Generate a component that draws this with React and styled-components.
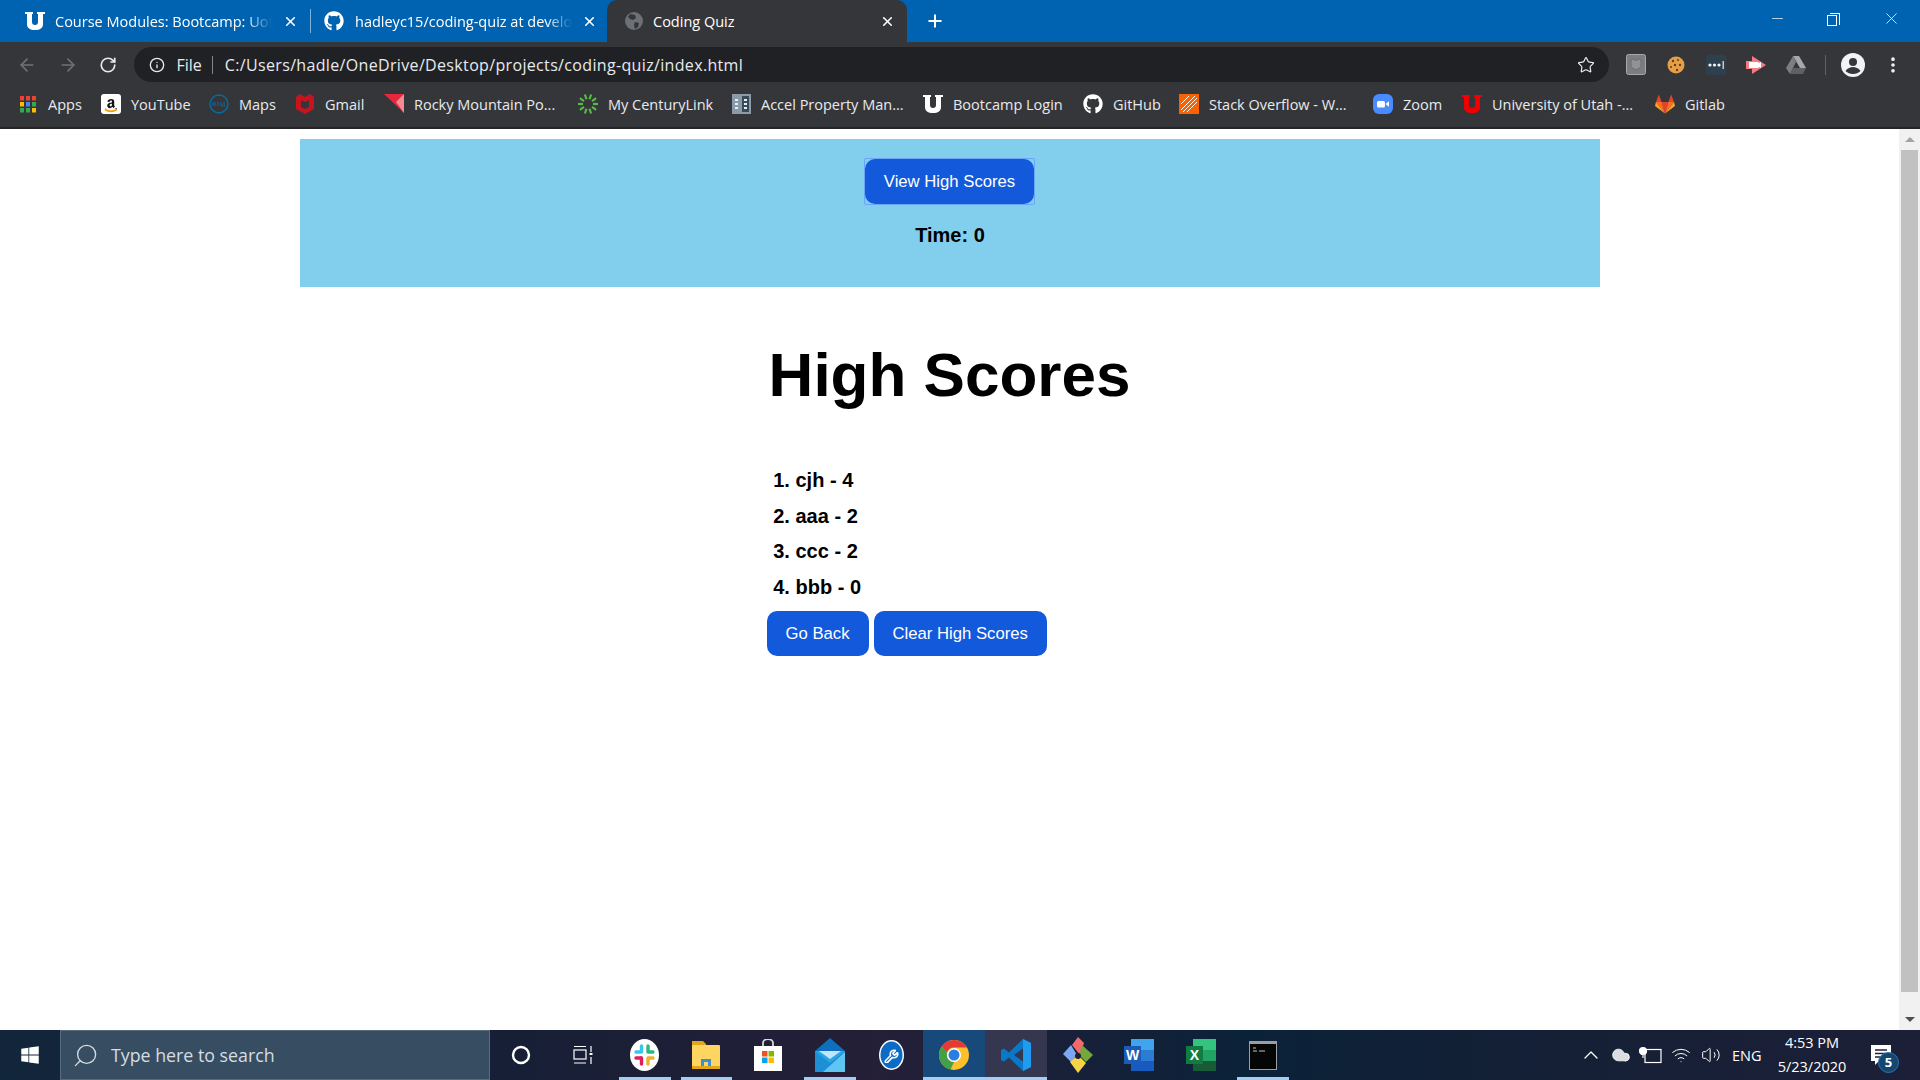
import React from "react";
import styled, { createGlobalStyle } from "styled-components";
import { FaGithub, FaWindows, FaAmazon } from "react-icons/fa";
import {
  ArrowLeft,
  ArrowRight,
  RotateCw,
  Info,
  Star,
  X,
  Plus,
  Minus,
  Search,
  MoreVertical,
  ChevronUp,
  Cloud,
  Volume2,
  Wifi,
  Wrench,
} from "lucide-react";

const GlobalStyle = createGlobalStyle`
  html, body {
    margin: 0;
    height: 100%;
    overflow: hidden;
    background: #fff;
  }
  #root { height: 100%; }
  * { box-sizing: border-box; }
`;

const UI_FONT = `"Open Sans", "Noto Sans", sans-serif`;
const PAGE_FONT = `"Liberation Sans", Arial, sans-serif`;

const Screen = styled.div`
  display: flex;
  flex-direction: column;
  width: 1920px;
  height: 1080px;
`;

/* ---- tab strip ---- */
const TabStrip = styled.div`
  display: flex;
  align-items: stretch;
  height: 42px;
  background: #0063b1;
  font-family: ${UI_FONT};
  color: #fff;
`;

const Tab = styled.div`
  display: flex;
  align-items: center;
  width: ${(p) => p.$w}px;
  padding-left: ${(p) => p.$pad}px;
  border-radius: 10px 10px 0 0;
  background: ${(p) => (p.$active ? "#35363a" : "transparent")};
`;

const Favicon = styled.span`
  display: flex;
  flex: none;
  width: 20px;
  justify-content: center;
`;

const TabTitle = styled.span`
  width: ${(p) => p.$w}px;
  margin-left: ${(p) => p.$ml}px;
  font-size: 14.5px;
  white-space: nowrap;
  overflow: hidden;
  mask-image: ${(p) => (p.$fade ? "linear-gradient(90deg, #000 88%, transparent)" : "none")};
`;

const TabClose = styled.span`
  display: flex;
  margin-left: ${(p) => p.$ml}px;
`;

const TabDivider = styled.span`
  align-self: center;
  width: 1px;
  height: 24px;
  background: #7fb2d9;
`;

const NewTab = styled.span`
  display: flex;
  align-items: center;
  margin-left: 18px;
`;

const WindowControls = styled.div`
  display: flex;
  align-items: flex-start;
  margin-left: auto;
  padding-top: 9px;
`;

const WindowButton = styled.span`
  display: flex;
  align-items: center;
  justify-content: center;
  width: 57px;
  height: 19px;
`;

const RestoreIcon = styled.span`
  position: relative;
  display: block;
  width: 10px;
  height: 11px;
  margin: 3px 5px 0 0;
  border: 1px solid #fff;
  &::after {
    content: "";
    position: absolute;
    top: -3px;
    right: -4px;
    width: 9px;
    height: 11px;
    border-top: 1px solid #fff;
    border-right: 1px solid #fff;
  }
`;

/* ---- address bar ---- */
const Toolbar = styled.div`
  display: flex;
  align-items: center;
  height: 42px;
  padding: 3px 0 0 17px;
  background: #35363a;
  font-family: ${UI_FONT};
`;

const NavButton = styled.span`
  display: flex;
  justify-content: center;
  width: 20px;
  margin-right: 20.5px;
`;

const Omnibox = styled.div`
  display: flex;
  align-items: center;
  width: 1475px;
  height: 35px;
  margin-left: -5px;
  padding: 0 14px 0 15px;
  border-radius: 18px;
  background: #202124;
  color: #e8eaed;
`;

const FileChip = styled.span`
  margin-left: 12px;
  font-size: 16px;
`;

const OmniDivider = styled.span`
  width: 1px;
  height: 18px;
  margin: 0 12px 0 10px;
  background: #80868b;
`;

const Url = styled.span`
  font-size: 16px;
  letter-spacing: 0.34px;
  white-space: nowrap;
`;

const StarWrap = styled.span`
  display: flex;
  margin-left: auto;
`;

const ExtensionRow = styled.div`
  display: flex;
  align-items: center;
  margin-left: 7px;
`;

const Extension = styled.span`
  display: flex;
  justify-content: center;
  width: 40px;
  margin-left: ${(p) => p.$ml || 0}px;
`;

const ToolDivider = styled.span`
  width: 1px;
  height: 20px;
  margin: 0 15px 0 9px;
  background: #5f6368;
`;

/* ---- bookmarks ---- */
const Bookmarks = styled.div`
  display: flex;
  align-items: center;
  gap: 20px;
  height: 45px;
  padding: 0 0 3px 18px;
  background: #35363a;
  border-bottom: 2px solid #242528;
  font-family: ${UI_FONT};
  color: #e8eaed;
`;

const Bookmark = styled.div`
  display: flex;
  align-items: center;
  gap: 10px;
`;

const BookmarkIcon = styled.span`
  display: flex;
  justify-content: center;
  width: 20px;
`;

const BookmarkLabel = styled.span`
  width: ${(p) => p.$w}px;
  font-size: 14.5px;
  white-space: nowrap;
`;

/* ---- page ---- */
const Viewport = styled.div`
  flex: 1;
  display: flex;
  min-height: 0;
  background: #fff;
`;

const PageBody = styled.main`
  flex: 1;
  padding-top: 10px;
  font-family: ${PAGE_FONT};
  color: #000;
`;

const Wrapper = styled.div`
  width: 1300px;
  margin: 0 auto;
`;

const Header = styled.header`
  display: flex;
  flex-direction: column;
  align-items: center;
  height: 148px;
  padding-top: 20px;
  background: #81cfec;
`;

const QuizButton = styled.button`
  position: relative;
  height: 45px;
  padding: 1px 19px 0;
  border: 0;
  border-radius: 10px;
  background: #1259dc;
  color: #fff;
  font-family: ${PAGE_FONT};
  font-size: 16.7px;
  &::after {
    content: "";
    display: ${(p) => (p.$focused ? "block" : "none")};
    position: absolute;
    inset: -1px;
    border: 1.5px solid #6aa5f7;
    border-radius: 2px;
  }
`;

const Timer = styled.p`
  margin: 20px 0 0;
  padding-left: 1px;
  font-size: 20px;
  font-weight: 700;
  line-height: 23px;
`;

const Scores = styled.section`
  width: 366px;
  margin: 0 auto;
`;

const Title = styled.h1`
  margin: 0;
  padding-top: 51px;
  font-size: 62px;
  line-height: 74px;
  text-align: center;
  white-space: nowrap;
`;

const ScoreList = styled.ol`
  margin: 51px 0 0;
  padding: 0 0 0 29px;
`;

const ScoreItem = styled.li`
  font-size: 20px;
  font-weight: 700;
  line-height: 35.5px;
`;

const ButtonRow = styled.div`
  display: flex;
  gap: 5px;
  margin-top: 6px;
`;

const Scrollbar = styled.aside`
  display: flex;
  flex-direction: column;
  align-items: center;
  width: 21px;
  background: #f1f1f1;
`;

const ScrollArrow = styled.span`
  flex: none;
  height: 21px;
  display: flex;
  align-items: center;
  margin-top: ${(p) => (p.$down ? "auto" : 0)};
  &::before {
    content: "";
    border-left: 5px solid transparent;
    border-right: 5px solid transparent;
    ${(p) => (p.$down ? "border-top: 5px solid #505050;" : "border-bottom: 5px solid #a3a3a3;")}
  }
`;

const ScrollThumb = styled.span`
  width: 17px;
  height: 842px;
  background: #c1c1c1;
`;

/* ---- taskbar ---- */
const Taskbar = styled.footer`
  display: flex;
  align-items: stretch;
  height: 50px;
  background: linear-gradient(
    90deg,
    #12263b 0,
    #161f36 500px,
    #251f38 880px,
    #0a2238 1250px,
    #122036 1450px,
    #1c1f37 1920px
  );
  font-family: ${UI_FONT};
  color: #fff;
`;

const StartCell = styled.span`
  display: flex;
  align-items: center;
  justify-content: center;
  width: 60px;
`;

const SearchBox = styled.div`
  display: flex;
  align-items: center;
  width: 430px;
  padding-left: 11px;
  background: #374e62;
  border: 1px solid #566b7c;
  color: #d5dde3;
`;

const FlippedSearch = styled(Search)`
  transform: scaleX(-1);
`;

const SearchText = styled.span`
  margin-left: 12px;
  font-size: 17.8px;
`;

const TaskCell = styled.span`
  position: relative;
  display: flex;
  align-items: center;
  justify-content: center;
  width: 61.85px;
  background: ${(p) => p.$bg || "transparent"};
  &::after {
    content: "";
    display: ${(p) => (p.$open ? "block" : "none")};
    position: absolute;
    left: ${(p) => (p.$full ? 0 : 5)}px;
    right: ${(p) => (p.$full ? 0 : 5)}px;
    bottom: 0;
    height: 3px;
    background: #a5cdf0;
  }
`;

const Tray = styled.div`
  display: flex;
  align-items: center;
  margin-left: auto;
  padding-right: 24px;
`;

const TrayIcon = styled.span`
  display: flex;
  justify-content: center;
  width: 30px;
`;

const Lang = styled.span`
  margin-left: 6px;
  width: 36px;
  font-size: 14.5px;
`;

const Clock = styled.div`
  width: 84px;
  margin-left: 2px;
  font-size: 14.5px;
  line-height: 24px;
  text-align: center;
`;

const Notify = styled.span`
  position: relative;
  display: flex;
  justify-content: center;
  width: 30px;
  margin-left: 12px;
`;

const NotifyBadge = styled.span`
  position: absolute;
  right: -3px;
  bottom: -8px;
  width: 21px;
  height: 21px;
  border-radius: 50%;
  background: #14466f;
  border: 1px solid #2a77b5;
  font-size: 13px;
  font-weight: 700;
  line-height: 19px;
  text-align: center;
`;

/* ---- drawn icons ---- */
const UtahLogo = ({ size = 20, color = "#fff" }) => (
  <svg width={size} height={size} viewBox="0 0 20 20">
    <path
      fill={color}
      d="M0 1h8v2H7v8c0 2 1 3 3 3s3-1 3-3V3h-1V1h8v2h-2v10c0 4-3 6-8 6s-8-2-8-6V3H0z"
    />
  </svg>
);

const AppsGrid = () => {
  const colors = ["#ea4335", "#ea4335", "#ea4335", "#fbbc04", "#4285f4", "#34a853", "#34a853", "#34a853", "#fbbc04"];
  return (
    <svg width="16" height="17" viewBox="0 0 16 17">
      {colors.map((c, i) => (
        <rect key={i} x={(i % 3) * 6} y={Math.floor(i / 3) * 6} width="4" height="4.5" fill={c} />
      ))}
    </svg>
  );
};

const AmazonIcon = () => (
  <svg width="20" height="20" viewBox="0 0 20 20">
    <rect width="20" height="20" rx="3" fill="#fff" />
    <foreignObject x="3" y="1" width="14" height="14">
      <FaAmazon size={14} color="#111" />
    </foreignObject>
    <path d="M4 15.500c4 2.500 8 2.500 12 0" stroke="#f90" strokeWidth="1.700" fill="none" />
  </svg>
);

const DellIcon = () => (
  <svg width="20" height="20" viewBox="0 0 20 20" fill="none" stroke="#0a6b9f">
    <circle cx="10" cy="10" r="9" strokeWidth="1.400" />
    <path d="M4 8v4M6 8v4M9 8v4M12 8v4h2M15 8v4h1.500" strokeWidth="1" />
  </svg>
);

const McAfeeIcon = () => (
  <svg width="18" height="20" viewBox="0 0 18 20">
    <path fill="#c8141e" d="M0 3l4-3 5 3 5-3 4 3v12l-9 5-9-5z" />
    <path fill="#35363a" d="M5 6l4 2 4-2v7l-4 2-4-2z" />
  </svg>
);

const RockyIcon = () => (
  <svg width="20" height="20" viewBox="0 0 20 20">
    <path fill="#e8263c" d="M0 0h20v19z" />
    <path fill="#f58a96" d="M12 8l8-8v19z" />
  </svg>
);

const CenturyIcon = () => (
  <svg width="20" height="20" viewBox="0 0 20 20" stroke="#57b947" strokeWidth="2.200">
    {Array.from({ length: 10 }).map((_, i) => {
      const a = (i * Math.PI) / 5;
      return (
        <line
          key={i}
          x1={10 + Math.cos(a) * 5}
          y1={10 + Math.sin(a) * 5}
          x2={10 + Math.cos(a) * 10}
          y2={10 + Math.sin(a) * 10}
        />
      );
    })}
  </svg>
);

const AccelIcon = () => (
  <svg width="19" height="20" viewBox="0 0 19 20">
    <rect width="19" height="20" fill="#8a9aa8" />
    <rect x="10" y="2" width="7" height="16" fill="#394a58" />
    <path fill="#e8edf0" d="M3 5h3v2H3zM3 9h3v2H3zM3 13h3v2H3zM12 5h3v2h-3zM12 9h3v2h-3zM12 13h3v2h-3z" />
  </svg>
);

const HomeDepotIcon = () => (
  <svg width="20" height="20" viewBox="0 0 20 20" stroke="#fff" strokeWidth="1">
    <rect width="20" height="20" fill="#f96302" stroke="none" />
    <path d="M2 16L16 2M4 18L18 4M8 18L18 8M2 10L10 2" />
  </svg>
);

const ZoomIcon = () => (
  <svg width="20" height="20" viewBox="0 0 20 20">
    <rect width="20" height="20" rx="6" fill="#4a8cff" />
    <rect x="4" y="7" width="8" height="6.500" rx="1.500" fill="#fff" />
    <path fill="#fff" d="M13 9.500l3-2.200v5.500l-3-2.200z" />
  </svg>
);

const GitlabIcon = () => (
  <svg width="21" height="20" viewBox="0 0 21 20">
    <path fill="#e24329" d="M10.500 20L7 8h7z" />
    <path fill="#fc6d26" d="M10.500 20L1 8h6zM10.500 20L20 8h-6z" />
    <path fill="#fca326" d="M1 8L0 12l10.500 8zM20 8l1 4-10.500 8z" />
    <path fill="#e24329" d="M1 8l3-8 3 8zM14 8l3-8 3 8z" />
  </svg>
);

const GlobeIcon = () => (
  <svg width="18" height="18" viewBox="0 0 18 18">
    <circle cx="9" cy="9" r="9" fill="#6d7074" />
    <path fill="#35363a" d="M5 2l5 1 1 3-3 2-3-1-2-2zM10 10l4 1-1 4-3 2-1-4z" />
  </svg>
);

const ShieldExt = () => (
  <svg width="20" height="21" viewBox="0 0 20 21">
    <rect x=".5" y=".5" width="19" height="20" rx="2" fill="#7b7d80" stroke="#a6a8aa" />
    <path fill="#909294" stroke="#6b6d70" d="M5 6l2-1 3 1.500L13 5l2 1v7l-5 3-5-3z" />
  </svg>
);

const CookieExt = () => (
  <svg width="18" height="18" viewBox="0 0 18 18">
    <circle cx="9" cy="9" r="8.500" fill="#e3a047" />
    <g fill="#6b3d12">
      <circle cx="6" cy="5" r="1.200" />
      <circle cx="11" cy="4" r="1" />
      <circle cx="13" cy="9" r="1.200" />
      <circle cx="8" cy="9" r="1.200" />
      <circle cx="4" cy="11" r="1" />
      <circle cx="10" cy="14" r="1.200" />
    </g>
  </svg>
);

const DotsExt = () => (
  <svg width="20" height="20" viewBox="0 0 20 20">
    <rect width="20" height="20" rx="2" fill="#2e3f4e" />
    <g fill="#f2f4f5">
      <circle cx="4" cy="10" r="1.600" />
      <circle cx="8.500" cy="10" r="1.600" />
      <circle cx="13" cy="10" r="1.600" />
    </g>
    <rect x="16.500" y="6" width="1.500" height="8" fill="#c0c6ca" />
  </svg>
);

const ArrowExt = () => (
  <svg width="20" height="18" viewBox="0 0 20 18">
    <path fill="#f67b7f" d="M6 0l14 9-14 9v-5H0V5h6z" />
    <path fill="#fff" d="M3 6h9l1 1 2-1v6l-2-1-1 1H3z" />
  </svg>
);

const DriveExt = () => (
  <svg width="20" height="18" viewBox="0 0 20 18">
    <path fill="#a7a8aa" d="M7 0h6l7 12h-6z" />
    <path fill="#7d7e80" d="M7 0l3 6-6 12-4-6z" />
    <path fill="#5f6063" d="M4 18l3-6h13l-3 6z" />
  </svg>
);

const AvatarIcon = () => (
  <svg width="24" height="24" viewBox="0 0 24 24">
    <circle cx="12" cy="12" r="12" fill="#f1f3f4" />
    <circle cx="12" cy="9" r="4" fill="#35363a" />
    <path fill="#35363a" d="M4.500 18c2-3 5-4 7.500-4s5.500 1 7.500 4c-2 2-4.500 3-7.500 3s-5.500-1-7.500-3z" />
  </svg>
);

const CortanaIcon = () => (
  <svg width="20" height="20" viewBox="0 0 20 20">
    <circle cx="10" cy="10" r="8" fill="none" stroke="#fff" strokeWidth="2.400" />
  </svg>
);

const TaskViewIcon = () => (
  <svg width="20" height="20" viewBox="0 0 20 20" stroke="#fff" strokeWidth="1.200" fill="none">
    <rect x="1" y="5" width="12" height="9" />
    <path d="M1 1.500h12M1 18h12M18 1v6M18 12v7" />
    <path d="M16.500 9h3" strokeWidth="2" />
  </svg>
);

const SlackIcon = () => (
  <svg width="29" height="32" viewBox="0 0 29 32">
    <ellipse cx="14.500" cy="16" rx="14.500" ry="16" fill="#fff" />
    <g strokeWidth="3.400" strokeLinecap="round">
      <path d="M11.500 7v6M11 13H6" stroke="#36c5f0" />
      <path d="M18 7v6M18 13h5" stroke="#2eb67d" />
      <path d="M18 25v-6M18 19h5" stroke="#ecb22e" />
      <path d="M11.500 25v-6M11 19H6" stroke="#e01e5a" />
    </g>
  </svg>
);

const FolderIcon = () => (
  <svg width="28" height="28" viewBox="0 0 28 28">
    <path fill="#e3a616" d="M0 0h11l3 3v4H0z" />
    <rect y="4" width="28" height="24" rx="1" fill="#ffd562" />
    <path fill="#e3a616" d="M0 25h28v3H0z" />
    <path fill="#3d8ed6" d="M9 25v-7h10v7h-3v-4h-4v4z" />
  </svg>
);

const StoreIcon = () => (
  <svg width="28" height="32" viewBox="0 0 28 32">
    <path d="M9 7V4a5 4 0 0 1 10 0v3" stroke="#d5d8dc" strokeWidth="1.800" fill="none" />
    <rect y="7" width="28" height="25" fill="#fff" />
    <rect x="8" y="12" width="5.500" height="5.500" fill="#f25022" />
    <rect x="14.500" y="12" width="5.500" height="5.500" fill="#7fba00" />
    <rect x="8" y="18.500" width="5.500" height="5.500" fill="#00a4ef" />
    <rect x="14.500" y="18.500" width="5.500" height="5.500" fill="#ffb900" />
  </svg>
);

const MailIcon = () => (
  <svg width="30" height="34" viewBox="0 0 30 34">
    <path fill="#0d6fbd" d="M15 0l15 13v3H0v-3z" />
    <rect y="13" width="30" height="21" fill="#2aa5e6" />
    <path fill="#1d8fd4" d="M0 13l15 12 15-12v21H0z" />
    <path fill="#bfe6fa" d="M4 13h22l-11 8z" />
    <path fill="#5fc6f2" d="M30 34H8l22-20z" />
  </svg>
);

const ThunderIcon = () => (
  <svg width="25" height="30" viewBox="0 0 25 30">
    <ellipse cx="12.500" cy="15" rx="12.500" ry="15" fill="#fff" />
    <ellipse cx="12.500" cy="15" rx="11" ry="13.500" fill="#0a6cc4" />
    <foreignObject x="5" y="7" width="15" height="16">
      <Wrench size={15} color="#fff" strokeWidth={2.600} />
    </foreignObject>
  </svg>
);

const ChromeIcon = () => (
  <svg width="30" height="30" viewBox="0 0 30 30">
    <circle cx="15" cy="15" r="15" fill="#fbc02d" />
    <path fill="#e53935" d="M15 0a15 15 0 0 1 13 7.500H15a7.500 7.500 0 0 0-7 5L2.500 6.500A15 15 0 0 1 15 0z" />
    <path fill="#43a047" d="M2.500 6.500L8 12.500c-1 4 2 9.500 7 9.500L11.500 29.500A15 15 0 0 1 2.500 6.500z" />
    <circle cx="15" cy="15" r="7" fill="#fff" />
    <circle cx="15" cy="15" r="5.500" fill="#2a7de1" />
  </svg>
);

const VsCodeIcon = () => (
  <svg width="30" height="32" viewBox="0 0 30 32">
    <path fill="#0a78c8" d="M22 0l8 4v24l-8 4L8 18.500 3 22.500 0 21V11l3-1.500 5 4z" />
    <path fill="#1f9cf0" d="M22 0l8 4v24l-8 4z" />
    <path fill="#34374f" d="M22 9.500L13 16l9 6.500z" />
  </svg>
);

const GitExtIcon = () => (
  <svg width="30" height="36" viewBox="0 0 30 36">
    <path fill="#f26a6a" d="M15 0l6 6-4 12-8-10z" />
    <path fill="#7da7f2" d="M8 8l6 10-6 7-8-8z" />
    <path fill="#74a73c" d="M19 8l11 10-7 7-7-7z" />
    <path fill="#f5d547" d="M7 25l8-7 8 8-8 10z" />
    <circle cx="15" cy="19" r="3" fill="#1c1f37" />
  </svg>
);

const OfficeIcon = ({ letter, dark, mid, light, side }) => (
  <svg width="30" height="32" viewBox="0 0 30 32">
    <rect x="7" width="23" height="11" fill={light} />
    <rect x="7" y="11" width="23" height="11" fill={mid} />
    <rect x="7" y="22" width="23" height="10" fill={dark} />
    <rect y="7" width="17" height="18" fill={side} />
    <text
      x="8.500"
      y="21"
      fill="#fff"
      fontSize="14"
      fontWeight="700"
      textAnchor="middle"
      fontFamily="Liberation Sans, sans-serif"
    >
      {letter}
    </text>
  </svg>
);

const TerminalIcon = () => (
  <svg width="28" height="29" viewBox="0 0 28 29">
    <rect width="28" height="29" fill="#9a9da1" />
    <rect x="1" y="3" width="26" height="25" fill="#050505" />
    <path d="M4 7h3M4 10h4M10 10h6" stroke="#c7c7c7" strokeWidth="1" />
  </svg>
);

const PlugIcon = () => (
  <svg width="24" height="20" viewBox="0 0 24 20" fill="none" stroke="#fff" strokeWidth="1.200">
    <rect x="6" y="4.500" width="16" height="13" />
    <circle cx="4" cy="6" r="3.500" fill="#fff" />
    <path d="M4 9v4" />
  </svg>
);

const NotifyIcon = () => (
  <svg width="20" height="20" viewBox="0 0 20 20">
    <path fill="#fff" d="M0 0h20v16H8l-4 4v-4H0z" />
    <path stroke="#1c1f37" strokeWidth="1.400" d="M4 5h12M4 8.500h12M4 12h12" />
  </svg>
);

const bookmarks = [
  { label: "Apps", w: 33, icon: <AppsGrid /> },
  { label: "YouTube", w: 58, icon: <AmazonIcon /> },
  { label: "Maps", w: 36, icon: <DellIcon /> },
  { label: "Gmail", w: 39, icon: <McAfeeIcon /> },
  { label: "Rocky Mountain Po...", w: 144, icon: <RockyIcon /> },
  { label: "My CenturyLink", w: 103, icon: <CenturyIcon /> },
  { label: "Accel Property Man...", w: 142, icon: <AccelIcon /> },
  { label: "Bootcamp Login", w: 110, icon: <UtahLogo size={20} /> },
  { label: "GitHub", w: 46, icon: <FaGithub size={20} color="#fff" /> },
  { label: "Stack Overflow - W...", w: 144, icon: <HomeDepotIcon /> },
  { label: "Zoom", w: 39, icon: <ZoomIcon /> },
  { label: "University of Utah -...", w: 143, icon: <UtahLogo size={20} color="#f00000" /> },
  { label: "Gitlab", w: 40, icon: <GitlabIcon /> },
];

const scores = ["cjh - 4", "aaa - 2", "ccc - 2", "bbb - 0"];

const taskItems = [
  { key: "cortana", icon: <CortanaIcon /> },
  { key: "view", icon: <TaskViewIcon /> },
  { key: "slack", icon: <SlackIcon />, open: true },
  { key: "files", icon: <FolderIcon />, open: true },
  { key: "store", icon: <StoreIcon /> },
  { key: "mail", icon: <MailIcon />, open: true },
  { key: "thunder", icon: <ThunderIcon /> },
  { key: "chrome", icon: <ChromeIcon />, open: true, full: true, bg: "#17497a" },
  { key: "code", icon: <VsCodeIcon />, open: true, full: true, bg: "#34374f" },
  { key: "git", icon: <GitExtIcon /> },
  {
    key: "word",
    icon: <OfficeIcon letter="W" side="#1a5cb8" light="#41a5ee" mid="#2b7cd3" dark="#185abd" />,
  },
  {
    key: "excel",
    icon: <OfficeIcon letter="X" side="#107c41" light="#33c481" mid="#21a366" dark="#185c37" />,
  },
  { key: "terminal", icon: <TerminalIcon />, open: true },
];

export default function App() {
  return (
    <Screen>
      <GlobalStyle />
      <TabStrip>
        <Tab $w={310} $pad={25}>
          <Favicon>
            <UtahLogo size={20} />
          </Favicon>
          <TabTitle $w={217} $ml={10} $fade>
            Course Modules: Bootcamp: UofU
          </TabTitle>
          <TabClose $ml={11}>
            <X size={15} strokeWidth={2.6} />
          </TabClose>
        </Tab>
        <TabDivider />
        <Tab $w={296} $pad={13}>
          <Favicon>
            <FaGithub size={20} color="#fff" />
          </Favicon>
          <TabTitle $w={217} $ml={11} $fade>
            hadleyc15/coding-quiz at develop
          </TabTitle>
          <TabClose $ml={10}>
            <X size={15} strokeWidth={2.6} />
          </TabClose>
        </Tab>
        <Tab $w={300} $pad={17} $active>
          <Favicon>
            <GlobeIcon />
          </Favicon>
          <TabTitle $w={226} $ml={9}>
            Coding Quiz
          </TabTitle>
          <TabClose $ml={1}>
            <X size={15} strokeWidth={2.6} />
          </TabClose>
        </Tab>
        <NewTab>
          <Plus size={20} strokeWidth={2.4} />
        </NewTab>
        <WindowControls>
          <WindowButton>
            <Minus size={17} strokeWidth={1} />
          </WindowButton>
          <WindowButton>
            <RestoreIcon />
          </WindowButton>
          <WindowButton>
            <X size={19} strokeWidth={1} />
          </WindowButton>
        </WindowControls>
      </TabStrip>

      <Toolbar>
        <NavButton>
          <ArrowLeft size={20} color="#6e7175" strokeWidth={2} />
        </NavButton>
        <NavButton>
          <ArrowRight size={20} color="#6e7175" strokeWidth={2} />
        </NavButton>
        <NavButton>
          <RotateCw size={18} color="#e8eaed" strokeWidth={2.2} />
        </NavButton>
        <Omnibox>
          <Info size={16} strokeWidth={2} />
          <FileChip>File</FileChip>
          <OmniDivider />
          <Url>C:/Users/hadle/OneDrive/Desktop/projects/coding-quiz/index.html</Url>
          <StarWrap>
            <Star size={18} strokeWidth={1.6} />
          </StarWrap>
        </Omnibox>
        <ExtensionRow>
          <Extension>
            <ShieldExt />
          </Extension>
          <Extension>
            <CookieExt />
          </Extension>
          <Extension>
            <DotsExt />
          </Extension>
          <Extension>
            <ArrowExt />
          </Extension>
          <Extension>
            <DriveExt />
          </Extension>
          <ToolDivider />
          <AvatarIcon />
          <Extension $ml={8}>
            <MoreVertical size={20} color="#f1f3f4" strokeWidth={2.4} />
          </Extension>
        </ExtensionRow>
      </Toolbar>

      <Bookmarks>
        {bookmarks.map((b) => (
          <Bookmark key={b.label}>
            <BookmarkIcon>{b.icon}</BookmarkIcon>
            <BookmarkLabel $w={b.w}>{b.label}</BookmarkLabel>
          </Bookmark>
        ))}
      </Bookmarks>

      <Viewport>
        <PageBody>
          <Wrapper>
            <Header>
              <QuizButton $focused>View High Scores</QuizButton>
              <Timer>Time: 0</Timer>
            </Header>
            <Scores>
              <Title>High Scores</Title>
              <ScoreList>
                {scores.map((s) => (
                  <ScoreItem key={s}>{s}</ScoreItem>
                ))}
              </ScoreList>
              <ButtonRow>
                <QuizButton>Go Back</QuizButton>
                <QuizButton>Clear High Scores</QuizButton>
              </ButtonRow>
            </Scores>
          </Wrapper>
        </PageBody>
        <Scrollbar>
          <ScrollArrow />
          <ScrollThumb />
          <ScrollArrow $down />
        </Scrollbar>
      </Viewport>

      <Taskbar>
        <StartCell>
          <FaWindows size={20} />
        </StartCell>
        <SearchBox>
          <FlippedSearch size={27} strokeWidth={1.2} />
          <SearchText>Type here to search</SearchText>
        </SearchBox>
        {taskItems.map((t) => (
          <TaskCell key={t.key} $open={t.open} $full={t.full} $bg={t.bg}>
            {t.icon}
          </TaskCell>
        ))}
        <Tray>
          <TrayIcon>
            <ChevronUp size={24} strokeWidth={1.3} />
          </TrayIcon>
          <TrayIcon>
            <Cloud size={20} fill="#d9dce0" strokeWidth={1} />
          </TrayIcon>
          <TrayIcon>
            <PlugIcon />
          </TrayIcon>
          <TrayIcon>
            <Wifi size={20} strokeWidth={1.2} />
          </TrayIcon>
          <TrayIcon>
            <Volume2 size={20} strokeWidth={1.2} />
          </TrayIcon>
          <Lang>ENG</Lang>
          <Clock>
            <div>4:53 PM</div>
            <div>5/23/2020</div>
          </Clock>
          <Notify>
            <NotifyIcon />
            <NotifyBadge>5</NotifyBadge>
          </Notify>
        </Tray>
      </Taskbar>
    </Screen>
  );
}
